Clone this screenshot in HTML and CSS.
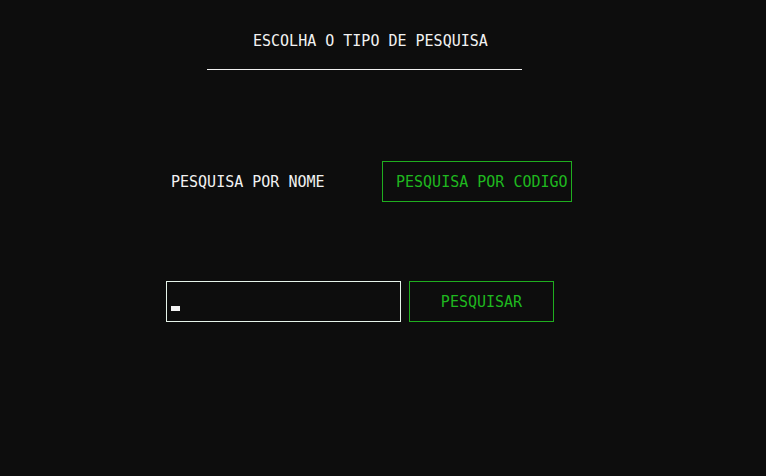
FILE: index.html
```html
<!DOCTYPE html>
<html lang="pt">
<head>
<meta charset="utf-8">
<title>Escolha o tipo de pesquisa</title>
<link rel="stylesheet" href="styles.css">
</head>
<body>
  <main class="screen">
    <header class="title-block">
      <h1 class="title">ESCOLHA O TIPO DE PESQUISA</h1>
    </header>
    <section class="options">
      <span class="option">PESQUISA POR NOME</span>
      <span class="option option-active">PESQUISA POR CODIGO</span>
    </section>
    <section class="search">
      <div class="field"><span class="cursor"></span></div>
      <div class="btn">PESQUISAR</div>
    </section>
  </main>
</body>
</html>
```
FILE: styles.css
```css
html, body {
  margin: 0;
  padding: 0;
  background: #0d0d0d;
}
body {
  width: 766px;
  height: 476px;
  overflow: hidden;
  font-family: "DejaVu Sans Mono", "Liberation Mono", monospace;
  font-size: 15px;
  color: #f2f2f2;
}
.screen {
  display: flex;
  flex-direction: column;
}
.title-block {
  margin: 32px 0 0 207px;
  width: 315px;
  border-bottom: 1px solid #f0f0f0;
  padding-bottom: 19px;
}
.title {
  margin: 0 0 0 46px;
  font-size: 15px;
  font-weight: normal;
  line-height: 18px;
}
.options {
  display: flex;
  align-items: center;
  margin: 91px 0 0 171px;
}
.option {
  line-height: 18px;
  width: 211px;
  flex: none;
}
.option-active {
  box-sizing: border-box;
  width: 190px;
  height: 41px;
  display: flex;
  align-items: center;
  padding-left: 13px;
  border: 1px solid #1fae1f;
  color: #1fb81f;
  white-space: nowrap;
}
.search {
  display: flex;
  margin: 79px 0 0 166px;
  gap: 8px;
}
.field {
  box-sizing: border-box;
  width: 235px;
  height: 41px;
  border: 1px solid #e6f4ea;
  display: flex;
  align-items: flex-end;
  padding: 0 0 10px 4px;
}
.cursor {
  width: 9px;
  height: 5px;
  background: #f2f2f2;
}
.btn {
  box-sizing: border-box;
  width: 145px;
  height: 41px;
  border: 1px solid #1fae1f;
  color: #1fb81f;
  display: flex;
  align-items: center;
  justify-content: center;
}
```
